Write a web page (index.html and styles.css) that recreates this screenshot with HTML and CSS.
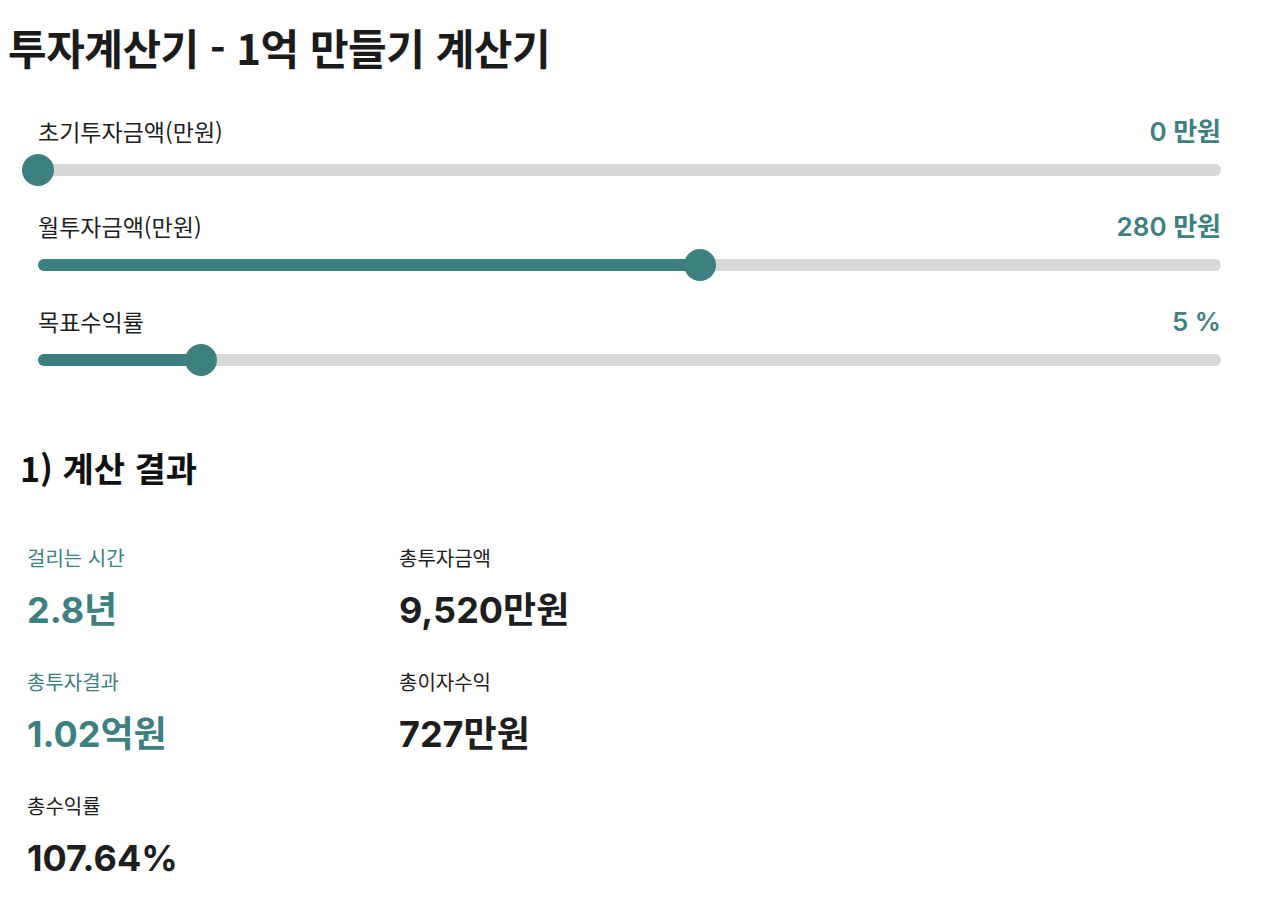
FILE: index.html
```html
<!DOCTYPE html>
<html lang="ko">
<head>
  <meta charset="UTF-8" />
  <meta name="viewport" content="width=device-width, initial-scale=1.0">
  <title>투자계산기 - 1억 만들기 계산기</title>
  <link rel="stylesheet" href="styles.css">
</head>
<body>
  <h1 class="title">투자계산기 - 1억 만들기 계산기</h1>

  <div class="sliders">
    <div class="slider-row">
      <div class="slider-head">
        <span class="slider-label">초기투자금액(만원)</span>
        <span class="slider-value">0 만원</span>
      </div>
      <div class="track">
        <div class="fill" style="width: 0%"></div>
        <div class="thumb" style="left: 0%"></div>
      </div>
    </div>

    <div class="slider-row">
      <div class="slider-head">
        <span class="slider-label">월투자금액(만원)</span>
        <span class="slider-value">280 만원</span>
      </div>
      <div class="track">
        <div class="fill" style="width: 56%"></div>
        <div class="thumb" style="left: 56%"></div>
      </div>
    </div>

    <div class="slider-row">
      <div class="slider-head">
        <span class="slider-label">목표수익률</span>
        <span class="slider-value">5 %</span>
      </div>
      <div class="track">
        <div class="fill" style="width: 13.8%"></div>
        <div class="thumb" style="left: 13.8%"></div>
      </div>
    </div>
  </div>

  <h2 class="result-title">1) 계산 결과</h2>

  <div class="results">
    <div class="result">
      <div class="result-label accent">걸리는 시간</div>
      <div class="result-value accent">2.8년</div>
    </div>
    <div class="result">
      <div class="result-label">총투자금액</div>
      <div class="result-value">9,520만원</div>
    </div>
    <div class="result">
      <div class="result-label accent">총투자결과</div>
      <div class="result-value accent">1.02억원</div>
    </div>
    <div class="result">
      <div class="result-label">총이자수익</div>
      <div class="result-value">727만원</div>
    </div>
    <div class="result">
      <div class="result-label">총수익률</div>
      <div class="result-value">107.64%</div>
    </div>
  </div>
</body>
</html>
```

FILE: styles.css
```css
body {
  margin: 8px;
  font-family: "Noto Sans CJK KR", "Noto Sans", sans-serif;
  color: #1e1e1e;
  background-color: #fff;
}

.title {
  margin: 11px 0 0;
  font-size: 42px;
  font-weight: 700;
  line-height: 56px;
  letter-spacing: -0.5px;
  color: #1b1b1b;
}

.sliders {
  margin: 38px 51px 0 30px;
}

.slider-row {
  margin-bottom: 32px;
}

.slider-row:last-child {
  margin-bottom: 0;
}

.slider-head {
  display: flex;
  justify-content: space-between;
  align-items: baseline;
  height: 36px;
  line-height: 36px;
}

.slider-label {
  font-size: 23px;
}

.slider-value {
  font-family: "Inter", "Noto Sans CJK KR", sans-serif;
  font-size: 26px;
  font-weight: 600;
  color: #3d8080;
}

.track {
  position: relative;
  margin-top: 15px;
  height: 12px;
  border-radius: 6px;
  background-color: #d8d8d8;
}

.fill {
  height: 100%;
  border-radius: 6px;
  background-color: #3d8080;
}

.thumb {
  position: absolute;
  top: 50%;
  width: 32px;
  height: 32px;
  margin: -16px 0 0 -16px;
  border-radius: 50%;
  background-color: #3d8080;
}

.result-title {
  margin: 80px 0 0 12px;
  font-size: 34px;
  font-weight: 700;
  line-height: 44px;
  color: #111;
}

.results {
  display: grid;
  grid-template-columns: 372px 372px;
  margin: 54px 0 0 19px;
  row-gap: 36px;
}

.result-label {
  font-size: 20px;
  line-height: 28px;
  color: #1e1e1e;
}

.result-value {
  margin-top: 16px;
  font-family: "Inter", "Noto Sans CJK KR", sans-serif;
  font-size: 36px;
  font-weight: 700;
  line-height: 44px;
  color: #1e1e1e;
}

.accent {
  color: #3d8080;
}
```
